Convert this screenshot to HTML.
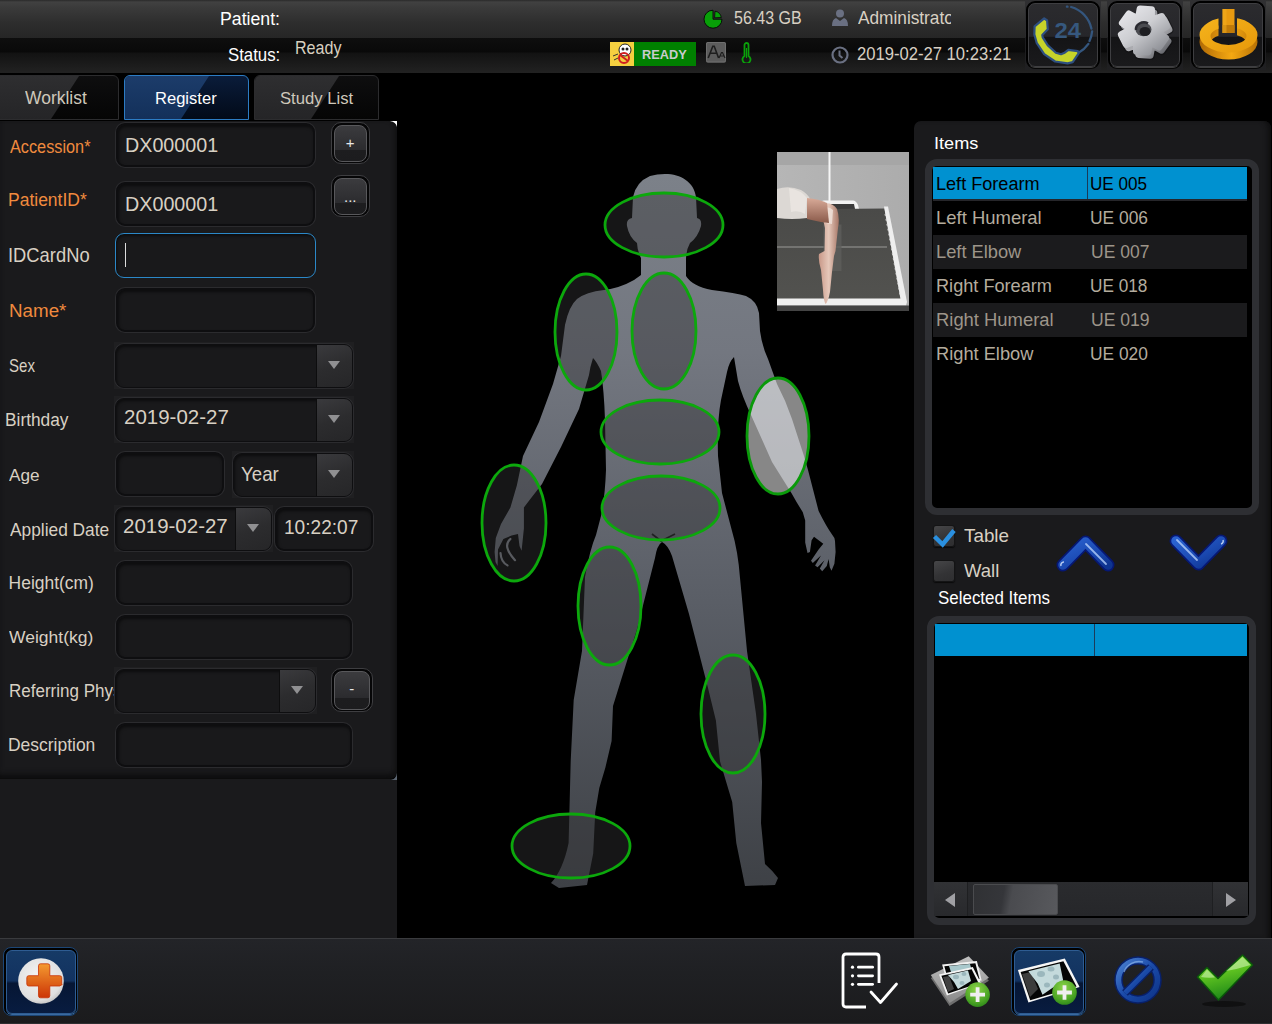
<!DOCTYPE html>
<html><head><meta charset="utf-8">
<style>
*{box-sizing:border-box}
html,body{margin:0;padding:0}
body{width:1272px;height:1024px;position:relative;overflow:hidden;background:#000;font-family:"Liberation Sans",sans-serif;color:#d6cfc2}
.a{position:absolute}
.t{position:absolute;white-space:nowrap;line-height:1;transform-origin:0 0}
/* top bar */
#tb1{left:0;top:0;width:1272px;height:38px;background:linear-gradient(#2a2a2a 0px,#414141 2px,#3a3a3a 8px,#2e2e2e 22px,#262626 38px)}
#tb2{left:0;top:38px;width:1272px;height:35px;background:linear-gradient(#0e0e0e 0px,#090909 14px,#121212 15px,#1a1a1a 25px,#222222 35px)}
/* tabs */
.tab{position:absolute;top:75px;height:45px;border-radius:6px 6px 0 0;border:1px solid #2c2c2e;background:linear-gradient(#0e0e0f,#050505);overflow:hidden}
.tab:before{content:"";position:absolute;left:0;top:0;width:100%;height:100%;background:linear-gradient(#2e2e30,#252527);clip-path:polygon(0 0,84px 0,56px 100%,0 100%)}
.tab.sel{border:1px solid #2c7cc4;background:linear-gradient(#0a1c3a,#020a18)}
.tab.sel:before{background:linear-gradient(#1c3c6a,#13305a)}
/* left panel */
#lp{left:0;top:121px;width:396.5px;height:658px;background:#1a1a1c;border-radius:0 7px 7px 0;border-bottom:1px solid #0c0c0c;box-shadow:inset -4px 0 4px -2px #111112,inset 0 -6px 6px -3px #0c0c0d}
#lpbelow{left:0;top:779px;width:397px;height:159px;background:#1a1a1c}
.lbl{position:absolute;white-space:nowrap;line-height:1;font-size:18px;color:#d6cfc2}
.req{color:#ef8a45}
.inp{position:absolute;height:44px;border:2px solid #0e0e10;border-radius:9px;background:#19191b;box-shadow:inset 1px 2px 3px rgba(0,0,0,.5),0 0 0 1px #2b2b2e}
.inp.focus{border:1.5px solid #2b88c8;box-shadow:inset 1px 2px 3px rgba(0,0,0,.5)}
.cbo{position:absolute;height:47px;background:#1f1f21}
.cbo .in{position:absolute;left:1px;top:1.5px;bottom:1px;right:1px;border:1.5px solid #0e0e10;border-radius:9px;background:#19191b;overflow:hidden;box-shadow:inset 1px 2px 3px rgba(0,0,0,.5),0 0 0 1px #2b2b2e}
.cbo .btn{position:absolute;top:0;bottom:0;right:0;width:36px;background:linear-gradient(160deg,#3a3a3d,#2c2c2e 50%,#262628);border-left:1.5px solid #0d0d0e}
.cbo .btn:after{content:"";position:absolute;left:11px;top:16.5px;border-left:6px solid transparent;border-right:6px solid transparent;border-top:8px solid #909092}
.val{position:absolute;white-space:nowrap;line-height:1;font-size:19px;color:#d6cfc2}
.sbtn{position:absolute;width:39px;height:42px;border:1.5px solid #3e3e41;border-radius:10px;background:#060607;padding:1.5px 2px 1.5px 1.5px}
.sbtn .i{width:100%;height:100%;border:1px solid #58585b;border-radius:8px;background:linear-gradient(#3b3b3e,#2b2b2e 70%,#1d1d1f 70%,#1c1c1e);color:#e8e8e8;text-align:center;font-size:15px}
/* right panel */
#rp{left:914px;top:121px;width:357px;height:817px;background:#1a1a1c;border-radius:7px 7px 0 0;box-shadow:inset -5px 0 5px -2px #0e0e0f}
#items{left:925px;top:159px;width:334px;height:356px;border:7px solid #2e2f33;border-radius:12px;background:#000}
.row{position:absolute;left:1px;width:314px;height:34px}
.row span{position:absolute;top:9px;white-space:nowrap;line-height:1}
/* bottom bar */
#bb{left:0;top:938px;width:1272px;height:86px;background:linear-gradient(#232428,#1f2023 40%,#1b1b1d);border-top:1.5px solid #3a3b3e;border-bottom:1.5px solid #2e2f31}

.ibox{top:0;width:76px;height:70px;background:linear-gradient(#303032,#2a2a2c 53%,#1c1c1e 54%,#202022)}
.ibtn{position:absolute;top:1px;width:74px;height:68px;border:2px solid #000;border-radius:9px;background:#000}
.ibtn .ii{position:absolute;left:0;top:0;right:0;bottom:0;border:1px solid #3e3e41;border-radius:7px;background:linear-gradient(#2b2b2e,#26262a 52%,#141416 54%,#1a1a1c);box-shadow:0 2px 1px -1px rgba(150,150,150,0.45)}

.cb{position:absolute;width:22px;height:22px;border-radius:3px;background:linear-gradient(160deg,#464648,#333335 60%,#2e2e30);border:1px solid #141415;box-shadow:0 1px 1px #0a0a0a}
#sel{left:927px;top:616px;width:329px;height:309px;border:7px solid #2e2f33;border-radius:12px;background:#000;padding:0}

.bbtn{position:absolute;border:1.5px solid #1c4676;border-radius:8px;background:#000;padding:1.5px}
.bbtn .bi{width:100%;height:100%;border:1px solid #2e5c92;border-radius:6px;background:linear-gradient(#163a66,#123260 48%,#061634 52%,#081c40 100%);box-shadow:0 1px 0 #3a6aa0}
</style></head>
<body>
<!-- TOP BAR -->
<div class="a" id="tb1"></div>
<div class="a" id="tb2"></div>
<div class="t" style="left:220.3px;top:10.4px;font-size:18.90px;color:#fff;transform:scaleX(0.937)">Patient:</div>
<div class="t" style="left:227.8px;top:46.3px;font-size:18.60px;color:#fff;transform:scaleX(0.903)">Status:</div>
<div class="t" style="left:294.5px;top:40.1px;font-size:17.88px;color:#d8d0c0;transform:scaleX(0.900)">Ready</div>


<!-- TOP RIGHT STATUS -->
<svg class="a" style="left:703px;top:9px" width="21" height="21" viewBox="0 0 21 21"><path d="M10,10.2 L10,1.2 A9,9 0 1 0 19,10.2 Z" fill="#08a008" stroke="#050505" stroke-width="0.9"/><path d="M11.6,8.8 L12,2.2 A7.6,7.6 0 0 1 18.3,8.5 Z" fill="#08a008" stroke="#050505" stroke-width="0.8"/></svg>
<div class="t" style="left:733.9px;top:10.2px;font-size:17.44px;color:#d8d0c3;transform:scaleX(0.919)">56.43 GB</div>
<svg class="a" style="left:832px;top:9px" width="16" height="18" viewBox="0 0 16 18"><circle cx="8" cy="4.5" r="4" fill="#6a7082"/><path d="M0,17 Q0,10 4,9 L8,12 L12,9 Q16,10 16,17 Z" fill="#6a7082"/></svg>
<div class="a" style="left:850px;top:0;width:101px;height:37px;overflow:hidden"><div class="t" style="left:7.9px;top:9.8px;font-size:17.59px;color:#d8d0c3;transform:scaleX(0.981)">Administrator</div></div>
<div class="a" style="left:610px;top:42px;width:24px;height:24px;background:#f5d040"></div>
<svg class="a" style="left:610px;top:42px" width="24" height="24" viewBox="0 0 24 24"><circle cx="15" cy="8" r="6" fill="#fff" stroke="#222" stroke-width="1"/><circle cx="13" cy="7" r="1.5" fill="#222"/><circle cx="17" cy="7" r="1.5" fill="#222"/><circle cx="14" cy="16" r="5" fill="none" stroke="#d02020" stroke-width="2"/><path d="M10,13 L18,19" stroke="#d02020" stroke-width="2"/><path d="M3,14 L8,12 M4,18 L8,16" stroke="#333" stroke-width="1"/></svg>
<div class="a" style="left:634px;top:42px;width:62px;height:24px;background:#008000"></div>
<div class="t" style="left:642.1px;top:49.0px;font-size:12.79px;color:#c8cccc;transform:scaleX(0.999);font-weight:bold">READY</div>
<svg class="a" style="left:706px;top:41.5px" width="20" height="21" viewBox="0 0 20 21"><rect x="0" y="0" width="20" height="20.5" rx="1.5" fill="#5c5c5c"/><rect x="0.5" y="0.5" width="19" height="19.5" rx="1.5" fill="none" stroke="#6e6e6e" stroke-width="1"/><path d="M2.2,16 L6.8,4.2 L8.2,4.2 L12.6,16 M4,11.3 L11,11.3" fill="none" stroke="#1e1e1e" stroke-width="1.6"/><path d="M13,16 L15.5,10.5 L16.5,10.5 L19,16 M14,14 L18,14" fill="none" stroke="#1e1e1e" stroke-width="1.2"/></svg>

<svg class="a" style="left:741px;top:42px" width="11" height="21" viewBox="0 0 11 21"><path d="M3.5,14 L3.5,3 A2,2 0 0 1 7.5,3 L7.5,14 A4,4 0 1 1 3.5,14 Z" fill="none" stroke="#0aa00a" stroke-width="1.8"/><path d="M5.5,6 L5.5,16" stroke="#0aa00a" stroke-width="1.2"/></svg>
<svg class="a" style="left:831px;top:46px" width="18" height="18" viewBox="0 0 18 18"><circle cx="9" cy="9" r="7.5" fill="none" stroke="#6a7082" stroke-width="2.2"/><path d="M8.5,4.5 L8.5,9.5 L11.5,12" fill="none" stroke="#6a7082" stroke-width="2"/></svg>
<div class="t" style="left:857.4px;top:45.9px;font-size:17.59px;color:#d8d0c3;transform:scaleX(0.945)">2019-02-27 10:23:21</div>

<!-- TOP ICON BUTTONS -->
<div class="a ibox" style="left:1025px"></div><div class="ibtn" style="left:1026px"><div class="ii"></div></div>
<div class="a ibox" style="left:1107px"></div><div class="ibtn" style="left:1108px"><div class="ii"></div></div>
<div class="a ibox" style="left:1190px"></div><div class="ibtn" style="left:1191px"><div class="ii"></div></div>
<svg class="a" style="left:1026px;top:1px" width="73" height="67" viewBox="0 0 73 67">
<path d="M40.9,5.6 L41.5,5.7 M45.2,6 A28.5,28.5 0 0 1 65.4,27.6 M66.1,30.5 A28.5,28.5 0 0 1 63.5,40 M62.4,42.9 A28.5,28.5 0 0 1 52.6,51.7" fill="none" stroke="#34567e" stroke-width="2.3" stroke-linecap="round"/>
<path d="M18.2,17.3 L8.6,25.4 L8.3,33.4 L10.8,42.2 L18.2,53.2 L29.1,60.5 L41.6,62.3 L46.7,61.2 L52.6,52.4 L51.8,50.2 L42.3,48.8 L38.7,51.7 L35,53.2 L29.9,51.7 L21.8,44.4 L16.7,36.3 L16.3,34.1 L21.8,28.3 L21.1,19.5 Z" fill="#c6d42a" stroke="#2e5080" stroke-width="2.2" stroke-linejoin="round"/>
<text x="28.6" y="36.8" font-family="Liberation Sans" font-weight="bold" font-size="22" fill="#36587e" textLength="26.5" lengthAdjust="spacingAndGlyphs">24</text>
</svg>
<svg class="a" style="left:1108px;top:1px" width="75" height="67" viewBox="0 0 75 67">
<defs><linearGradient id="gr" x1="0.1" y1="0" x2="0.9" y2="1"><stop offset="0" stop-color="#e6e6ea"/><stop offset="0.45" stop-color="#cdced2"/><stop offset="1" stop-color="#8a8c92"/></linearGradient>
<linearGradient id="gs" x1="0" y1="0" x2="1" y2="1"><stop offset="0" stop-color="#6a6c72"/><stop offset="0.6" stop-color="#b8b8bc"/><stop offset="1" stop-color="#505258"/></linearGradient></defs>
<path transform="translate(2.5,3.5)" fill="#0e0e10" stroke="#0e0e10" stroke-width="9" stroke-linejoin="round" d="M30.2,17.9 L30.8,15.6 L32.1,8.0 L43.5,8.8 L43.4,16.6 L43.7,18.9 L46.1,18.3 L53.7,15.5 L58.6,25.3 L51.5,29.1 L49.5,30.5 L51.2,32.2 L57.6,37.0 L51.1,46.0 L44.1,42.1 L41.8,41.1 L41.2,43.4 L39.9,51.0 L28.5,50.2 L28.6,42.4 L28.3,40.1 L25.9,40.7 L18.3,43.5 L13.4,33.7 L20.5,29.9 L22.5,28.5 L20.8,26.8 L14.4,22.0 L20.9,13.0 L27.9,16.9 Z" opacity="0.5"/>
<path transform="translate(2.3,3.2)" fill="url(#gs)" stroke="url(#gs)" stroke-width="7" stroke-linejoin="round" d="M30.2,17.9 L30.8,15.6 L32.1,8.0 L43.5,8.8 L43.4,16.6 L43.7,18.9 L46.1,18.3 L53.7,15.5 L58.6,25.3 L51.5,29.1 L49.5,30.5 L51.2,32.2 L57.6,37.0 L51.1,46.0 L44.1,42.1 L41.8,41.1 L41.2,43.4 L39.9,51.0 L28.5,50.2 L28.6,42.4 L28.3,40.1 L25.9,40.7 L18.3,43.5 L13.4,33.7 L20.5,29.9 L22.5,28.5 L20.8,26.8 L14.4,22.0 L20.9,13.0 L27.9,16.9 Z"/>
<path fill="url(#gr)" stroke="url(#gr)" stroke-width="7" stroke-linejoin="round" d="M30.2,17.9 L30.8,15.6 L32.1,8.0 L43.5,8.8 L43.4,16.6 L43.7,18.9 L46.1,18.3 L53.7,15.5 L58.6,25.3 L51.5,29.1 L49.5,30.5 L51.2,32.2 L57.6,37.0 L51.1,46.0 L44.1,42.1 L41.8,41.1 L41.2,43.4 L39.9,51.0 L28.5,50.2 L28.6,42.4 L28.3,40.1 L25.9,40.7 L18.3,43.5 L13.4,33.7 L20.5,29.9 L22.5,28.5 L20.8,26.8 L14.4,22.0 L20.9,13.0 L27.9,16.9 Z"/>
<ellipse cx="35.5" cy="28.5" rx="8" ry="6.8" fill="#4a4b50"/><ellipse cx="37" cy="30.5" rx="5.5" ry="4.5" fill="#1e1e22"/><path d="M28,29 A8,6.8 0 0 1 40,22.3" fill="none" stroke="#2a2a30" stroke-width="2.5"/>
</svg>
<svg class="a" style="left:1191px;top:1px" width="75" height="67" viewBox="0 0 75 67">
<defs><linearGradient id="pw" x1="0" y1="0" x2="1" y2="1"><stop offset="0" stop-color="#f6b41c"/><stop offset="1" stop-color="#e6980a"/></linearGradient>
<linearGradient id="pws" x1="0" y1="0" x2="1" y2="0"><stop offset="0" stop-color="#b06a06"/><stop offset="0.55" stop-color="#f4a812"/><stop offset="1" stop-color="#b87206"/></linearGradient>
<clipPath id="pc"><path d="M0,0 L27.5,0 L27.5,36 L46,36 L46,0 L75,0 L75,67 L0,67 Z"/></clipPath></defs>
<g clip-path="url(#pc)">
<path fill-rule="evenodd" fill="url(#pws)" d="M8.5,41 A29,17.5 0 1 0 66.5,41 A29,17.5 0 1 0 8.5,41 Z M19.5,42 A18,9 0 1 1 55.5,42 A18,9 0 1 1 19.5,42 Z"/>
<path fill-rule="evenodd" fill="url(#pw)" d="M8.5,34 A29,17.5 0 1 0 66.5,34 A29,17.5 0 1 0 8.5,34 Z M19.5,35 A18,9 0 1 1 55.5,35 A18,9 0 1 1 19.5,35 Z"/>
</g>
<rect x="8.5" y="34" width="58" height="7" fill="url(#pws)" clip-path="url(#pc)" opacity="0"/>
<rect x="31.5" y="8" width="12" height="24" fill="#e89a10"/><rect x="31.5" y="24" width="12" height="8" fill="#c07a08"/><rect x="31.5" y="8" width="4" height="24" fill="#f4b020" opacity="0.5"/>
</svg>

<!-- TABS -->
<div class="tab" style="left:-6px;width:125px"></div>
<div class="tab sel" style="left:124px;width:125px"></div>
<div class="tab" style="left:254px;width:125px"></div>
<div class="t" style="left:25.2px;top:90.2px;font-size:17.44px;color:#cfc8bb;transform:scaleX(1.002)">Worklist</div>
<div class="t" style="left:155.2px;top:90.1px;font-size:17.15px;color:#fff;transform:scaleX(0.966)">Register</div>
<div class="t" style="left:279.6px;top:90.1px;font-size:17.15px;color:#cfc8bb;transform:scaleX(0.973)">Study List</div>

<!-- LEFT PANEL -->
<div class="a" id="lp"></div>
<div class="a" id="lpbelow"></div>
<svg class="a" style="left:390px;top:121px" width="7" height="6"><path d="M0,0 L7,0 L7,6 Q6,1 0,0 Z" fill="#fff"/></svg>
<svg class="a" style="left:391px;top:773px" width="6" height="7"><path d="M0,7 L6,7 L6,0 Q5,6 0,7 Z" fill="#5a6470"/></svg>

<div class="t" style="left:9.7px;top:137.7px;font-size:18.02px;color:#f08a3e;transform:scaleX(0.903)">Accession*</div>
<div class="inp" style="left:116px;top:123px;width:199px"></div>
<div class="t" style="left:124.9px;top:135.6px;font-size:19.91px;color:#d8d0c3;transform:scaleX(0.990)">DX000001</div>

<div class="t" style="left:8.3px;top:191.4px;font-size:18.75px;color:#f08a3e;transform:scaleX(0.933)">PatientID*</div>
<div class="inp" style="left:116px;top:182px;width:199px"></div>
<div class="t" style="left:125.2px;top:194.3px;font-size:20.35px;color:#d8d0c3;transform:scaleX(0.970)">DX000001</div>

<div class="t" style="left:7.7px;top:245.5px;font-size:19.48px;color:#d8d0c3;transform:scaleX(0.943)">IDCardNo</div>
<div class="inp focus" style="left:115px;top:233px;width:201px;height:45px"></div>
<div class="a" style="left:125px;top:243px;width:1.3px;height:24px;background:#dcdcdc"></div>

<div class="t" style="left:8.6px;top:301.9px;font-size:18.75px;color:#f08a3e;transform:scaleX(1.001)">Name*</div>
<div class="inp" style="left:116px;top:288px;width:199px"></div>

<div class="t" style="left:9.2px;top:358.0px;font-size:17.59px;color:#d8d0c3;transform:scaleX(0.856)">Sex</div>
<div class="cbo" style="left:114px;top:342px;width:240px"><div class="in"><div class="btn"></div></div></div>

<div class="t" style="left:5.3px;top:411.9px;font-size:17.88px;color:#d8d0c3;transform:scaleX(0.969)">Birthday</div>
<div class="cbo" style="left:114px;top:396px;width:240px"><div class="in"><div class="btn"></div></div></div>
<div class="t" style="left:123.8px;top:407.8px;font-size:19.48px;color:#d8d0c3;transform:scaleX(1.052)">2019-02-27</div>

<div class="t" style="left:9.1px;top:467.3px;font-size:17.15px;color:#d8d0c3;transform:scaleX(1.002)">Age</div>
<div class="inp" style="left:116px;top:452px;width:108px"></div>
<div class="cbo" style="left:232px;top:451px;width:122px"><div class="in"><div class="btn"></div></div></div>
<div class="t" style="left:241.0px;top:463.8px;font-size:20.20px;color:#d8d0c3;transform:scaleX(0.926)">Year</div>

<div class="t" style="left:10.3px;top:520.5px;font-size:18.17px;color:#d8d0c3;transform:scaleX(0.954)">Applied Date</div>
<div class="cbo" style="left:114px;top:505px;width:159px"><div class="in"><div class="btn"></div></div></div>
<div class="t" style="left:123.2px;top:516.9px;font-size:19.77px;color:#d8d0c3;transform:scaleX(1.036)">2019-02-27</div>
<div class="inp" style="left:275px;top:507px;width:98px"></div>
<div class="t" style="left:283.8px;top:517.9px;font-size:19.77px;color:#d8d0c3;transform:scaleX(0.966)">10:22:07</div>

<div class="t" style="left:8.6px;top:574.9px;font-size:17.44px;color:#d8d0c3;transform:scaleX(1.000)">Height(cm)</div>
<div class="inp" style="left:116px;top:561px;width:236px"></div>

<div class="t" style="left:9.4px;top:629.2px;font-size:17.01px;color:#d8d0c3;transform:scaleX(1.029)">Weight(kg)</div>
<div class="inp" style="left:116px;top:615px;width:236px"></div>

<div class="a" style="left:0;top:670px;width:114px;height:40px;overflow:hidden"><div class="t" style="left:8.5px;top:13.0px;font-size:17.44px;color:#d8d0c3;transform:scaleX(0.976)">Referring Physician</div></div>
<div class="cbo" style="left:114px;top:667px;width:203px"><div class="in"><div class="btn"></div></div></div>

<div class="t" style="left:8.4px;top:736.9px;font-size:17.59px;color:#d8d0c3;transform:scaleX(0.993)">Description</div>
<div class="inp" style="left:116px;top:723px;width:236px"></div>

<div class="sbtn" style="left:331px;top:122px"><div class="i" style="padding-top:8px">+</div></div>
<div class="sbtn" style="left:331px;top:175px"><div class="i" style="padding-top:9px">...</div></div>
<div class="sbtn" style="left:331px;top:668px;width:42px;height:44px"><div class="i" style="padding-top:8px">-</div></div>


<!-- BODY FIGURE -->
<svg class="a" style="left:0;top:0" width="1272" height="1024" viewBox="0 0 1272 1024">
<defs>
<linearGradient id="bg" x1="0" y1="174" x2="0" y2="887" gradientUnits="userSpaceOnUse">
<stop offset="0" stop-color="#7c8189"/><stop offset="0.25" stop-color="#737780"/><stop offset="0.6" stop-color="#5a5e66"/><stop offset="1" stop-color="#3e4146"/>
</linearGradient>
</defs>
<path fill="url(#bg)" d="M665,174 C681,174 694,182 696,197 L697,218 Q702,219 701,226 Q698,237 690,243 Q686,250 686,259 L686,276 Q692,286 712,290 Q736,293 746,296 Q757,301 759,313 L760,331 Q762,346 768,359 L777,384 Q786,401 792,419 L804,456 L808,470 L818.6,511 Q826,526 832.7,535.6 Q835,538 835,541 L835.6,552 L834.4,563.7 L831.5,570.7 L829.8,567.2 L828.6,559 L826.8,566 L822.2,571.3 L819.8,568.4 L824.5,560.2 L817.5,567.2 L815.1,565.4 L821,555.5 L812.8,563.1 L811,560.7 L818.6,549.6 L823.3,543.8 L814,536.7 L811.6,540.3 L809.9,552 L807.5,553.1 L805.2,542.6 L805.2,520.4 L802.8,512.2 Q797,503 791.7,493.4 L772,462 L751,415 Q742,396 738,381 L734,357 Q729,362 727,372 L721,400 Q717,421 718,456 L722,493 L732,531 Q738,551 740,578 L747,651 L756,714 L761,760 L762,782 L761,823 L765,864 Q773,871 778,878 L775,885 L745,886 L736.3,843 L732.2,802 L720,761.3 L715.9,720.4 L708,688 L689,614 L672,556 Q668,545 662,542 Q657,545 655,558 L637,629 L622,677 L613,706 L611.6,741 L605.4,767.5 L599.3,788 L595.2,812.5 L593.2,853.4 L587,885 L559,888 L551,883 Q563,870 568.6,843 L570.7,761 L573.7,700 L582,651 L585,577 Q590,549 596,535 L601,516 Q605,497 606,470 L605,420 Q604,390 601,371 Q597,362 593,358 Q590,367 589,375 L579,409 L561,447 L542,484 L529.2,500.4 L523.9,507.5 L523.9,528.5 L521.6,550.8 L519.5,546 L518,534 L511.6,535.6 L503.4,539 L498,549.6 L497.6,566 L495.5,562 L494.6,552 L495.8,537.9 L501,523.9 L510.4,507.5 L516.9,485.2 L523,456 L539,422 L553,384 L561,356 L565,325 Q569,306 577,299 Q586,292 604,290 Q620,288 634,280 L641,275 L641,258 Q637,250 637,243 Q629,237 627,226 Q626,219 632,218 L633,197 Q636,182 650,176 Q657,174 665,174 Z"/>
<path d="M652,534 L661,541 L675,534" fill="none" stroke="#151516" stroke-width="1.8"/>
<path d="M510.4,539 Q502,546 515,560.2 M500.5,553 Q501,562 507.5,565.4" fill="none" stroke="#74787f" stroke-width="2.2" stroke-linecap="round"/>
<g fill="rgba(52,52,53,0.43)" stroke="#0ca80c" stroke-width="2.8">
<ellipse cx="664" cy="225" rx="59" ry="32"/>
<ellipse cx="664" cy="331" rx="32" ry="58"/>
<ellipse cx="586" cy="332" rx="31" ry="58"/>
<ellipse cx="660" cy="432" rx="59" ry="32"/>
<ellipse cx="661" cy="508" rx="59" ry="32"/>
<ellipse cx="514" cy="523" rx="32" ry="58"/>
<ellipse cx="609.5" cy="606" rx="31.5" ry="59"/>
<ellipse cx="733" cy="714" rx="32" ry="59"/>
<ellipse cx="571" cy="846" rx="59" ry="32"/>
</g>
<ellipse cx="778" cy="436" rx="31" ry="58" fill="rgba(255,255,255,0.53)" stroke="#0a9a0a" stroke-width="2.8"/>
</svg>

<!-- RIGHT PANEL -->
<div class="a" id="rp"></div>
<div class="t" style="left:934.3px;top:135.6px;font-size:16.72px;color:#fff;transform:scaleX(1.085)">Items</div>
<div class="a" id="items">
  <div class="row" style="top:1px;height:32px;background:#0091d0"><div class="a" style="left:154px;top:0;width:1px;height:32px;background:#1a3a58"></div></div>
  <div class="row" style="top:33px;height:2px;background:#26262a"></div>
  <div class="row" style="top:35px;color:#cfc8bb"></div>
  <div class="row" style="top:69px;background:#1b1b1d"></div>
  <div class="row" style="top:103px;color:#cfc8bb"></div>
  <div class="row" style="top:137px;background:#1b1b1d"></div>
  <div class="row" style="top:171px;color:#cfc8bb"></div>
</div>
<div class="t" style="left:935.5px;top:175.2px;font-size:18.46px;color:#000;transform:scaleX(0.981)">Left Forearm</div>
<div class="t" style="left:1090.4px;top:175.2px;font-size:18.46px;color:#000;transform:scaleX(0.929)">UE 005</div>
<div class="t" style="left:935.5px;top:209.2px;font-size:18.46px;color:#b4ac9e;transform:scaleX(1.001)">Left Humeral</div>
<div class="t" style="left:1090.4px;top:209.2px;font-size:18.46px;color:#b4ac9e;transform:scaleX(0.944)">UE 006</div>
<div class="t" style="left:936.4px;top:243.2px;font-size:18.46px;color:#9d958a;transform:scaleX(0.991)">Left Elbow</div>
<div class="t" style="left:1090.7px;top:243.2px;font-size:18.46px;color:#9d958a;transform:scaleX(0.949)">UE 007</div>
<div class="t" style="left:935.5px;top:277.2px;font-size:18.46px;color:#b4ac9e;transform:scaleX(0.984)">Right Forearm</div>
<div class="t" style="left:1090.4px;top:277.2px;font-size:18.46px;color:#b4ac9e;transform:scaleX(0.933)">UE 018</div>
<div class="t" style="left:936.4px;top:311.2px;font-size:18.46px;color:#9d958a;transform:scaleX(0.998)">Right Humeral</div>
<div class="t" style="left:1090.7px;top:311.2px;font-size:18.46px;color:#9d958a;transform:scaleX(0.953)">UE 019</div>
<div class="t" style="left:935.5px;top:345.2px;font-size:18.46px;color:#b4ac9e;transform:scaleX(0.990)">Right Elbow</div>
<div class="t" style="left:1090.4px;top:345.2px;font-size:18.46px;color:#b4ac9e;transform:scaleX(0.942)">UE 020</div>


<!-- THUMB -->
<svg class="a" style="left:777px;top:152px" width="132" height="159" viewBox="0 0 132 159">
<defs>
<linearGradient id="tbg" x1="0" y1="0" x2="1" y2="0"><stop offset="0" stop-color="#b6b6b6"/><stop offset="1" stop-color="#acacac"/></linearGradient>
<linearGradient id="arm" x1="0" y1="0" x2="1" y2="0"><stop offset="0" stop-color="#c89888"/><stop offset="0.5" stop-color="#e6c8ba"/><stop offset="1" stop-color="#a87868"/></linearGradient>
<linearGradient id="uarm" x1="0" y1="0" x2="0" y2="1"><stop offset="0" stop-color="#d8aa98"/><stop offset="1" stop-color="#8a5a4a"/></linearGradient>
<linearGradient id="det" x1="0" y1="0" x2="0" y2="1"><stop offset="0" stop-color="#4a4a48"/><stop offset="1" stop-color="#52524f"/></linearGradient>
</defs>
<rect width="132" height="159" fill="url(#tbg)"/>
<rect width="132" height="13" fill="#a6a6a6"/>
<rect x="51.5" y="0" width="2" height="50" fill="#f6f6f6"/>
<path d="M44,57 L44,51 Q44,48.5 47,48.5 L76,48.5 Q79,48.5 81,53 L82,57 Z" fill="#f2f2f2"/>
<path d="M47,57 L47,52 L77,52 L78,57 Z" fill="#3a3a3a"/>
<path d="M0,57.5 L107.5,56.5 L124,147 L0,147 Z" fill="url(#det)"/>
<path d="M107,54.5 L111,54.5 L130,150 L124,150 Z" fill="#eeeeee"/>
<path d="M0,146.5 L124,146.5 L130,150 L129,153.5 L0,153.5 Z" fill="#f0f0f0"/>
<rect x="0" y="153.5" width="132" height="5.5" fill="#444"/>
<rect x="0" y="94.5" width="110" height="1" fill="#9a9a98"/>
<rect x="46.5" y="72.5" width="18" height="46.5" fill="#5e5e5b" opacity="0.8"/>
<path d="M108,62 L123,143" stroke="#e0e0e0" stroke-width="0.8" stroke-dasharray="2 3"/>
<path d="M0,37 Q12,33 24,38 Q31,42 33,47 L30,66 Q15,68 0,66 Z" fill="#dcd8d4"/><path d="M12,36 Q24,38 30,46 L28,62 Q22,58 14,60 Z" fill="#eeeae6" opacity="0.7"/>
<path d="M43,52 Q55,49 60,57 Q63,66 61,76 L58.5,99 L57,104 Q56,112 55,120 L53,140 Q51,150 48.5,152 Q46.5,148 46,138 L44,118 Q41,108 42,102 L47.5,99 L48,76 Q46,66 43,60 Z" fill="url(#arm)"/><path d="M46,56 Q52,54 56,58 L55,72 Q50,72 47,70 Z" fill="#f0e4dc" opacity="0.8"/>
<path d="M30,46 Q42,47 50,51 L52,71 Q42,70 30,67 Z" fill="url(#uarm)"/>
</svg>

<!-- CHECKBOXES / ARROWS -->
<div class="cb" style="left:933px;top:525px"></div>
<svg class="a" style="left:932px;top:527px" width="26" height="22" viewBox="0 0 26 22"><path d="M2.5,9.5 L10.6,17.5 L22,3.5" fill="none" stroke="#2a90e0" stroke-width="4.5"/></svg>
<div class="t" style="left:963.5px;top:526.8px;font-size:18.46px;color:#d8d0c3;transform:scaleX(1.021)">Table</div>
<div class="cb" style="left:933px;top:560px"></div>
<div class="t" style="left:963.9px;top:562.1px;font-size:18.17px;color:#d8d0c3;transform:scaleX(1.021)">Wall</div>
<svg class="a" style="left:1055px;top:532px" width="62" height="42" viewBox="0 0 62 42">
<defs><linearGradient id="ag" x1="0" y1="0" x2="1" y2="1"><stop offset="0" stop-color="#2a62d0"/><stop offset="0.6" stop-color="#1a48b0"/><stop offset="1" stop-color="#0e3490"/></linearGradient></defs>
<path d="M8,33 L30.5,10 L53,33" fill="none" stroke="#061874" stroke-width="13" stroke-linecap="round" stroke-linejoin="round"/>
<path d="M8,33 L30.5,10 L53,33" fill="none" stroke="url(#ag)" stroke-width="9.5" stroke-linecap="round" stroke-linejoin="round"/>
<path d="M31,12 L51,32" fill="none" stroke="#c0d8ff" stroke-width="1.8" opacity="0.75" stroke-linecap="round"/>
<path d="M6,34 A3,3 0 0 1 9,30" fill="none" stroke="#e0ecff" stroke-width="1.5" opacity="0.8"/>
</svg>
<svg class="a" style="left:1168px;top:532px" width="62" height="42" viewBox="0 0 62 42">
<path d="M8,9 L30.5,32 L53,9" fill="none" stroke="#061874" stroke-width="13" stroke-linecap="round" stroke-linejoin="round"/>
<path d="M8,9 L30.5,32 L53,9" fill="none" stroke="url(#ag)" stroke-width="9.5" stroke-linecap="round" stroke-linejoin="round"/>
<path d="M9,8 L29,28" fill="none" stroke="#c0d8ff" stroke-width="1.8" opacity="0.75" stroke-linecap="round"/>
<path d="M55,8 A3,3 0 0 1 53,12" fill="none" stroke="#e0ecff" stroke-width="1.5" opacity="0.8"/>
</svg>
<div class="t" style="left:937.6px;top:589.9px;font-size:17.44px;color:#fff;transform:scaleX(0.971)">Selected Items</div>
<div class="a" id="sel">
  <div class="a" style="left:1px;top:1px;width:312px;height:32px;background:#0091d0"></div>
  <div class="a" style="left:160px;top:1px;width:1px;height:32px;background:#1b3b5b"></div>
  <div class="a" style="left:0;top:259px;width:314px;height:34px;background:linear-gradient(#2a2b2e,#26272a)"></div>
  <div class="a" style="left:0;top:259px;width:34px;height:34px;background:linear-gradient(#313235,#28292c);border-right:1px solid #1e1f21"></div>
  <div class="a" style="left:278px;top:259px;width:36px;height:34px;background:linear-gradient(#313235,#28292c);border-left:1px solid #1e1f21"></div>
  <div class="a" style="left:39px;top:261px;width:85px;height:31px;border:1px solid #4a4b4e;border-radius:2px;background:linear-gradient(100deg,#303134 0%,#35363a 35%,#4a4b4f 45%,#58595d 100%)"></div>
  <div class="a" style="left:11px;top:270px;border-top:7px solid transparent;border-bottom:7px solid transparent;border-right:10px solid #a0a0a4"></div>
  <div class="a" style="left:292px;top:270px;border-top:7px solid transparent;border-bottom:7px solid transparent;border-left:10px solid #a0a0a4"></div>
</div>

<!-- BOTTOM BAR -->
<div class="a" id="bb"></div>

<!-- BOTTOM ICONS -->
<div class="bbtn" style="left:3px;top:947px;width:75px;height:69px"><div class="bi"></div></div>
<svg class="a" style="left:3px;top:947px" width="75" height="70" viewBox="0 0 75 70">
<defs><radialGradient id="wc" cx="0.45" cy="0.4" r="0.6"><stop offset="0" stop-color="#f4f4f4"/><stop offset="0.85" stop-color="#e0e0e0"/><stop offset="1" stop-color="#c8c8c8"/></radialGradient>
<linearGradient id="oc" x1="0" y1="0" x2="0" y2="1"><stop offset="0" stop-color="#f49a30"/><stop offset="1" stop-color="#cc3406"/></linearGradient></defs>
<circle cx="38" cy="34" r="22.8" fill="url(#wc)"/>
<path d="M37.5,16.8 h7.3 q2,0 2,2 v9.9 h9.9 q2,0 2,2 v6.3 q2,0 -2,2 h-9.9 v9.8 q0,2 -2,2 h-7.3 q-2,0 -2,-2 v-9.8 h-9.7 q-2,0 -2,-2 v-6.3 q0,-2 2,-2 h9.7 v-9.9 q0,-2 2,-2 Z" fill="url(#oc)" stroke="#c83206" stroke-width="0.8"/>
</svg>

<svg class="a" style="left:840px;top:952px" width="60" height="58" viewBox="0 0 60 58">
<path d="M26,55 L6,55 Q3,55 3,52 L3,5 Q3,2 6,2 L36,2 Q39,2 39,5 L39,31" fill="none" stroke="#fff" stroke-width="2.8" stroke-linejoin="round"/>
<path d="M31,40 L40.5,50.5 L56.5,32" fill="none" stroke="#fff" stroke-width="2.8" stroke-linecap="round" stroke-linejoin="round"/>
<g fill="#fff"><circle cx="12.5" cy="15.2" r="1.6"/><circle cx="12.5" cy="23.8" r="1.6"/><circle cx="12.5" cy="32.3" r="1.6"/>
<rect x="17" y="13.8" width="17" height="2.8" rx="1.4"/><rect x="17" y="22.4" width="17" height="2.8" rx="1.4"/><rect x="17" y="30.9" width="17" height="2.8" rx="1.4"/></g>
</svg>

<svg class="a" style="left:925px;top:945px" width="70" height="66" viewBox="0 0 70 66">
<defs><linearGradient id="xr" x1="0" y1="0" x2="1" y2="0.3"><stop offset="0" stop-color="#0a0a0a"/><stop offset="0.12" stop-color="#6a6a6a"/><stop offset="0.3" stop-color="#101010"/><stop offset="0.38" stop-color="#b8d4d8"/><stop offset="0.6" stop-color="#d8eaec"/><stop offset="0.75" stop-color="#a8c8cc"/><stop offset="0.82" stop-color="#050505"/><stop offset="1" stop-color="#000"/></linearGradient>
<radialGradient id="gp" cx="0.45" cy="0.3" r="0.75"><stop offset="0" stop-color="#8ed44a"/><stop offset="0.7" stop-color="#4aa424"/><stop offset="1" stop-color="#2a8418"/></radialGradient>
<linearGradient id="stk" x1="0" y1="0" x2="0" y2="1"><stop offset="0" stop-color="#c0c0c0"/><stop offset="1" stop-color="#8a8a8a"/></linearGradient></defs>
<path d="M5.8,33 L43.7,14.3 L63.9,35.8 L24.6,61.1 Z" fill="#6e6e6e"/>
<path d="M5.8,30.1 L43.7,11.3 L63.9,32.8 L24.6,58.1 Z" fill="url(#stk)"/>
<path d="M17.1,19.5 L51.9,16.1 L56.7,35.5 L22.6,39.6 Z" fill="#f0f0f0"/>
<path d="M19.3,21.2 L50.4,18.2 L54.5,34 L23.9,37.6 Z" fill="#050505"/>
<path d="M24,21 L45,19 L48,30 L28,33 Z" fill="#a8c8cc"/>
<path d="M14,29.4 L47.8,21.9 L56,38.3 L21.9,50.6 Z" fill="#f4f4f4"/>
<path d="M16.4,30.8 L46.6,24.2 L53.6,38.2 L23.2,48.6 Z" fill="#050505"/>
<path d="M18,32 L24,31 L29,44 L23,47 Z" fill="#505050" opacity="0.8"/>
<path d="M23,30 L43,25.5 L46,36 L33,44 L29,37 Z" fill="#c4dadc"/>
<g fill="#7a9ca4" opacity="0.55"><ellipse cx="31" cy="32" rx="3" ry="2.2"/><ellipse cx="39" cy="29" rx="2.5" ry="2"/><ellipse cx="37" cy="38" rx="2.5" ry="2"/></g>
<circle cx="52.6" cy="49.6" r="12.3" fill="url(#gp)"/>
<path d="M50.7,42.3 h3.8 v5.4 h5.5 v3.8 h-5.5 v5.4 h-3.8 v-5.4 h-5.5 v-3.8 h5.5 Z" fill="#f0eef0"/>
</svg>

<div class="bbtn" style="left:1011px;top:947px;width:75px;height:69px"><div class="bi"></div></div>
<svg class="a" style="left:1011px;top:947px" width="76" height="70" viewBox="0 0 76 70">
<path d="M6.9,23.1 L53.8,11.4 L68.6,39.9 L17.4,55.5 Z" fill="#f6f6f6"/>
<path d="M9.6,24.9 L52.4,14.2 L65.6,39.6 L19.2,53.3 Z" fill="#050505"/>
<path d="M11,27 L20,25 L27,42 L19,50 Z" fill="#4a4a4a" opacity="0.8"/>
<path d="M17.4,24.3 L48.7,16.4 L52.2,33.6 L31.5,47.7 L26.8,36.8 Z" fill="#c4dadc"/>
<g fill="#7a9ca4" opacity="0.55"><ellipse cx="30" cy="27" rx="4" ry="3"/><ellipse cx="40" cy="22" rx="3.5" ry="2.5"/><ellipse cx="45" cy="30" rx="3" ry="2.5"/><ellipse cx="36" cy="38" rx="3" ry="2.5"/></g>
<circle cx="53.5" cy="45.5" r="12.3" fill="url(#gp)"/>
<path d="M51.6,38.2 h3.8 v5.4 h5.5 v3.8 h-5.5 v5.4 h-3.8 v-5.4 h-5.5 v-3.8 h5.5 Z" fill="#f0eef0"/>
</svg>

<svg class="a" style="left:1108px;top:950px" width="60" height="60" viewBox="0 0 60 60">
<defs><linearGradient id="bl" x1="0" y1="0" x2="1" y2="1"><stop offset="0" stop-color="#4a80d0"/><stop offset="0.5" stop-color="#1a4aa8"/><stop offset="1" stop-color="#0e3488"/></linearGradient></defs>
<circle cx="30" cy="30" r="19.5" fill="none" stroke="#08206a" stroke-width="8.5"/>
<circle cx="30" cy="30" r="19.5" fill="none" stroke="url(#bl)" stroke-width="5.5"/>
<path d="M17,43 L43,17" stroke="#08206a" stroke-width="8"/>
<path d="M17,43 L43,17" stroke="url(#bl)" stroke-width="5"/>
<path d="M16,22 A16,16 0 0 1 35,12" fill="none" stroke="#9ac0f0" stroke-width="1.5" opacity="0.6"/>
</svg>

<svg class="a" style="left:1194px;top:953px" width="64" height="58" viewBox="0 0 64 58">
<defs><linearGradient id="gk" x1="0" y1="0" x2="0.3" y2="1"><stop offset="0" stop-color="#90e040"/><stop offset="0.5" stop-color="#5cc020"/><stop offset="1" stop-color="#208a18"/></linearGradient></defs>
<ellipse cx="30" cy="51" rx="22" ry="3" fill="#0c0c0c" opacity="0.7"/>
<path d="M3.5,24 L13,14.5 L24,25.5 L48.5,2 L58.5,12 L24.5,47 Z" fill="url(#gk)" stroke="#0a5a0a" stroke-width="1.5" stroke-linejoin="round"/>
<path d="M13,16.5 L21,24.5 Q12,25 7,24 Z M48.5,4 L56.5,12 Q44,16 32,18 Z" fill="#d8f8c0" opacity="0.55"/>
</svg>

</body></html>
